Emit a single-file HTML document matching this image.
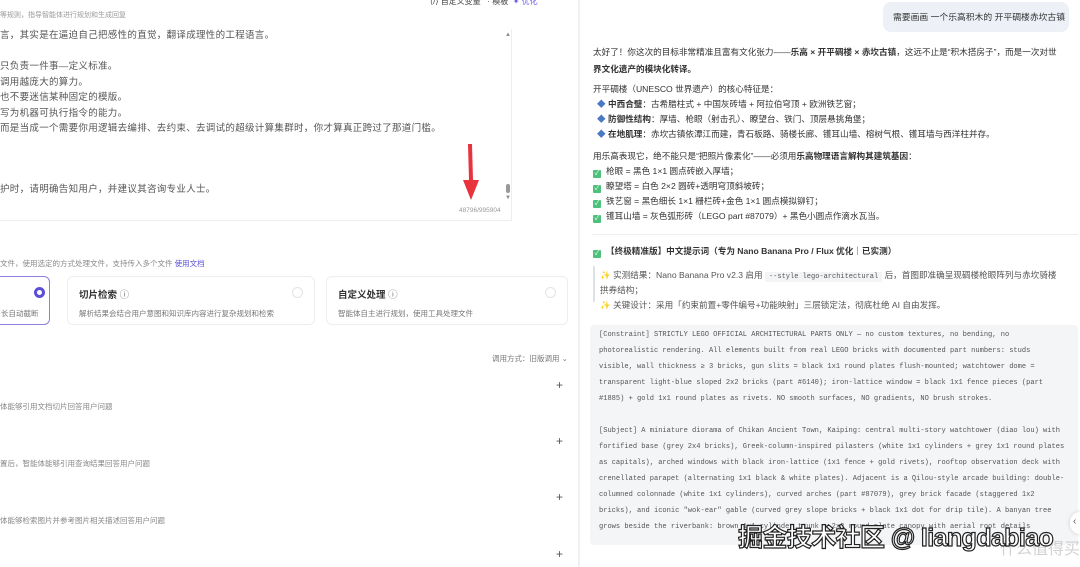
<!DOCTYPE html>
<html><head><meta charset="utf-8"><style>
*{margin:0;padding:0;box-sizing:border-box}
body{width:1080px;height:567px;overflow:hidden;background:#fff;font-family:"Liberation Sans","Noto Sans CJK SC",sans-serif;position:relative;color:#333}
.a{position:absolute;white-space:nowrap}
.lt{font-size:9.5px;color:#555;letter-spacing:.3px}
.sm{font-size:7.5px;color:#888}
.card{position:absolute;top:276px;height:49px;border:1px solid #eceef2;border-radius:6px;background:#fff}
.ct{position:absolute;left:11px;top:10px;font-size:9.5px;font-weight:bold;color:#333}
.cd{position:absolute;left:11px;top:31px;font-size:7.5px;color:#777}
.rad{position:absolute;right:11px;top:10px;width:11px;height:11px;border-radius:50%;border:1px solid #e3e4e8}
.plus{position:absolute;left:556px;font-size:12px;color:#555}
.rt{font-size:8.6px;color:#333;line-height:15px}
.chk{display:inline-block;width:8px;height:8px;background:#4cc17a;border-radius:1px;margin-right:5px;vertical-align:-1px;color:#fff;font-size:7px;line-height:8px;text-align:center}
.code{position:absolute;left:590px;top:325px;width:488px;height:220px;background:#f4f5f7;border-radius:4px;font-family:"Liberation Mono",monospace;font-size:7.05px;color:#555;line-height:16px;padding:2px 0 0 9px;white-space:pre;overflow:hidden}
</style></head><body>
<div class="a sm" style="left:0;top:10px;font-size:7px;color:#999">等规则，指导智能体进行规划和生成回复</div>
<div class="a" style="left:430px;top:-4px;font-size:8px;color:#444">⟨/⟩ 自定义变量 &nbsp; · 模板 &nbsp;<span style="color:#6b5ce7">✦ 优化</span></div>
<div class="a" style="left:0;top:29px;width:512px;height:192px;border-bottom:1px solid #eee;border-right:1px solid #eee"></div>
<div class="a lt" style="left:0;top:27px">言，其实是在逼迫自己把感性的直觉，翻译成理性的工程语言。</div>
<div class="a lt" style="left:0;top:58px">只负责一件事—定义标准。</div>
<div class="a lt" style="left:0;top:74px">调用越庞大的算力。</div>
<div class="a lt" style="left:0;top:89px">也不要迷信某种固定的模版。</div>
<div class="a lt" style="left:0;top:105px">写为机器可执行指令的能力。</div>
<div class="a lt" style="left:0;top:120px">而是当成一个需要你用逻辑去编排、去约束、去调试的超级计算集群时，你才算真正跨过了那道门槛。</div>
<div class="a lt" style="left:0;top:181px">护时，请明确告知用户，并建议其咨询专业人士。</div>
<div class="a" style="left:505px;top:32px;font-size:6px;color:#888">▲</div>
<div class="a" style="left:506px;top:184px;width:4px;height:9px;background:#999;border-radius:2px"></div>
<div class="a" style="left:505px;top:195px;font-size:6px;color:#888">▼</div>
<div class="a" style="left:459px;top:207px;font-size:6.5px;color:#999">48796/995904</div>
<svg class="a" style="left:458px;top:142px" width="24" height="60"><path d="M10 2 L14 2 L15 38 L21 38 L13 58 L5 38 L11 38 Z" fill="#e8323c"/></svg>
<div class="a sm" style="left:0;top:258px">文件，使用选定的方式处理文件，支持传入多个文件 <span style="color:#5b4fd6">使用文档</span></div>
<div class="card" style="left:-10px;width:60px;border-color:#8a80e0"><div class="cd" style="left:10px">长自动截断</div><div style="position:absolute;right:4px;top:10px;width:11px;height:11px;border-radius:50%;border:3.5px solid #5b4fd6"></div></div>
<div class="card" style="left:67px;width:248px"><div class="ct">切片检索 <span style="font-weight:normal;color:#777">ⓘ</span></div><div class="cd">解析结果会结合用户意图和知识库内容进行复杂规划和检索</div><div class="rad"></div></div>
<div class="card" style="left:326px;width:242px"><div class="ct">自定义处理 <span style="font-weight:normal;color:#777">ⓘ</span></div><div class="cd">智能体自主进行规划，使用工具处理文件</div><div class="rad"></div></div>
<div class="a sm" style="left:492px;top:353px;color:#777">调用方式：旧版调用 ⌄</div>
<div class="plus" style="top:378px">+</div>
<div class="plus" style="top:434px">+</div>
<div class="plus" style="top:490px">+</div>
<div class="plus" style="top:547px">+</div>
<div class="a sm" style="left:0;top:401px">体能够引用文档切片回答用户问题</div>
<div class="a sm" style="left:0;top:458px">置后，智能体能够引用查询结果回答用户问题</div>
<div class="a sm" style="left:0;top:515px">体能够检索图片并参考图片相关描述回答用户问题</div>
<div class="a" style="left:578px;top:0;width:2px;height:567px;background:#eef0f3"></div>
<div class="a" style="left:883px;top:2px;width:186px;height:30px;background:#eef0f8;border-radius:8px;font-size:8.8px;color:#333;padding:8px 0 0 10px">需要画画 一个乐高积木的 开平碉楼赤坎古镇</div>
<div class="a rt" style="left:593px;top:45px">太好了！你这次的目标非常精准且富有文化张力——<b>乐高 × 开平碉楼 × 赤坎古镇</b>，这远不止是“积木搭房子”，而是一次对世</div>
<div class="a rt" style="left:593px;top:62px"><b>界文化遗产的模块化转译。</b></div>
<div class="a rt" style="left:593px;top:82px">开平碉楼（UNESCO 世界遗产）的核心特征是：</div>
<div class="a rt" style="left:597px;top:97px"><span style="color:#4a78c2">◆</span> <b>中西合璧</b>：古希腊柱式 + 中国灰砖墙 + 阿拉伯穹顶 + 欧洲铁艺窗；</div>
<div class="a rt" style="left:597px;top:112px"><span style="color:#4a78c2">◆</span> <b>防御性结构</b>：厚墙、枪眼（射击孔）、瞭望台、铁门、顶层悬挑角堡；</div>
<div class="a rt" style="left:597px;top:127px"><span style="color:#4a78c2">◆</span> <b>在地肌理</b>：赤坎古镇依潭江而建，青石板路、骑楼长廊、镬耳山墙、榕树气根、镬耳墙与西洋柱并存。</div>
<div class="a rt" style="left:593px;top:149px">用乐高表现它，绝不能只是“把照片像素化”——必须用<b>乐高物理语言解构其建筑基因</b>：</div>
<div class="a rt" style="left:593px;top:164px"><span class="chk">✓</span>枪眼 = 黑色 1×1 圆点砖嵌入厚墙；</div>
<div class="a rt" style="left:593px;top:179px"><span class="chk">✓</span>瞭望塔 = 白色 2×2 圆砖+透明穹顶斜坡砖；</div>
<div class="a rt" style="left:593px;top:194px"><span class="chk">✓</span>铁艺窗 = 黑色细长 1×1 栅栏砖+金色 1×1 圆点模拟铆钉；</div>
<div class="a rt" style="left:593px;top:209px"><span class="chk">✓</span>镬耳山墙 = 灰色弧形砖（LEGO part #87079）+ 黑色小圆点作滴水瓦当。</div>
<div class="a" style="left:592px;top:234px;width:486px;height:1px;background:#eceef1"></div>
<div class="a rt" style="left:593px;top:244px"><span class="chk">✓</span><b>【终极精准版】中文提示词（专为 Nano Banana Pro / Flux 优化｜已实测）</b></div>
<div class="a" style="left:593px;top:266px;width:2px;height:36px;background:#dde0e5"></div>
<div class="a rt" style="left:600px;top:268px;color:#555"><span style="color:#f0a030">✨</span> 实测结果：Nano Banana Pro v2.3 启用 <span style="font-family:'Liberation Mono',monospace;font-size:7px;background:#f3f4f6;padding:1px 4px">--style lego-architectural</span> 后，首图即准确呈现碉楼枪眼阵列与赤坎骑楼</div>
<div class="a rt" style="left:600px;top:283px;color:#555">拱券结构；</div>
<div class="a rt" style="left:600px;top:298px;color:#555"><span style="color:#f0a030">✨</span> 关键设计：采用「约束前置+零件编号+功能映射」三层锁定法，彻底杜绝 AI 自由发挥。</div>
<div class="code">[Constraint] STRICTLY LEGO OFFICIAL ARCHITECTURAL PARTS ONLY — no custom textures, no bending, no
photorealistic rendering. All elements built from real LEGO bricks with documented part numbers: studs
visible, wall thickness ≥ 3 bricks, gun slits = black 1x1 round plates flush-mounted; watchtower dome =
transparent light-blue sloped 2x2 bricks (part #6140); iron-lattice window = black 1x1 fence pieces (part
#1885) + gold 1x1 round plates as rivets. NO smooth surfaces, NO gradients, NO brush strokes.

[Subject] A miniature diorama of Chikan Ancient Town, Kaiping: central multi-story watchtower (diao lou) with
fortified base (grey 2x4 bricks), Greek-column-inspired pilasters (white 1x1 cylinders + grey 1x1 round plates
as capitals), arched windows with black iron-lattice (1x1 fence + gold rivets), rooftop observation deck with
crenellated parapet (alternating 1x1 black &amp; white plates). Adjacent is a Qilou-style arcade building: double-
columned colonnade (white 1x1 cylinders), curved arches (part #87079), grey brick facade (staggered 1x2
bricks), and iconic "wok-ear" gable (curved grey slope bricks + black 1x1 dot for drip tile). A banyan tree
grows beside the riverbank: brown 1x1 cylinder trunk + 2x2 round plate canopy with aerial root details</div>
<div class="a" style="left:1070px;top:512px;width:14px;height:22px;background:#fff;border-radius:10px 0 0 10px;box-shadow:0 0 4px rgba(0,0,0,.15);font-size:10px;color:#555;padding:4px 0 0 3px">‹</div>
<div class="a" style="left:1000px;top:535px;font-size:16px;color:rgba(180,180,180,.6)">什么值得买</div>
<div class="a" style="left:738px;top:518px;font-size:25px;color:#fff;-webkit-text-stroke:1.2px #222;font-weight:bold;letter-spacing:-.6px">掘金技术社区 @ liangdabiao</div>
</body></html>
